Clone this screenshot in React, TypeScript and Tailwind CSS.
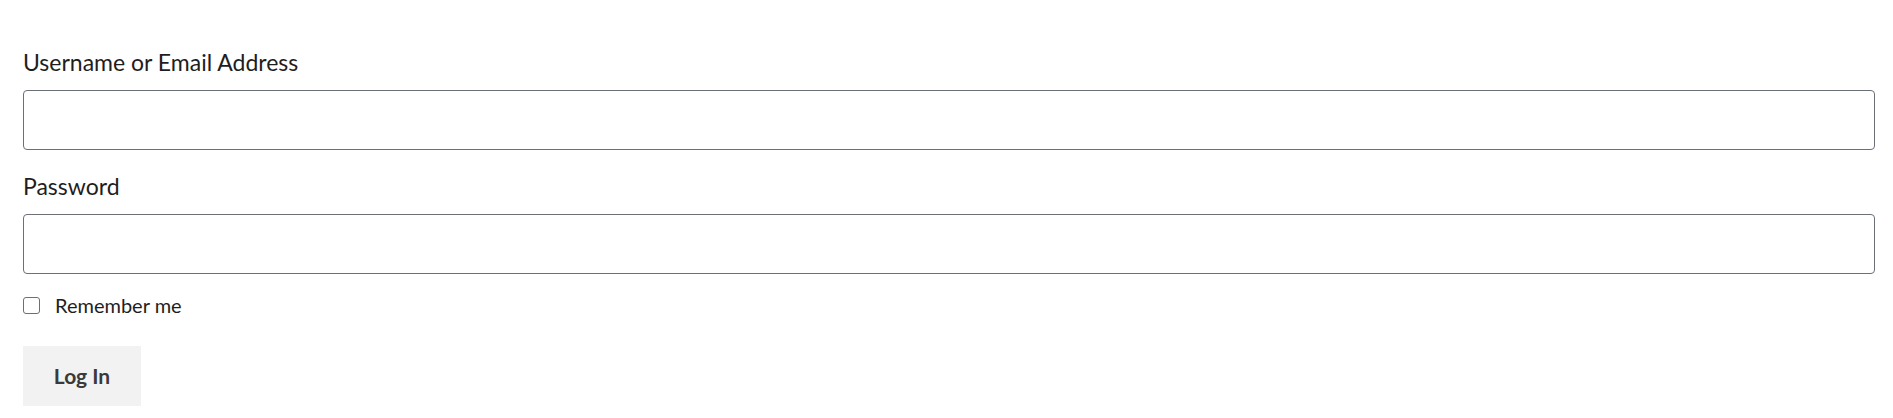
export default function App() {
  return (
    <div className="min-h-screen bg-white pl-[23px] pr-[18px] pt-[44px] font-['Lato','Liberation_Sans',sans-serif] text-[#1e1e1e]">
      <form className="flex flex-col" onSubmit={(e) => e.preventDefault()}>
        <label htmlFor="user_login" className="text-[23px] leading-[36px]">
          Username or Email Address
        </label>
        <input
          id="user_login"
          type="text"
          className="mt-[10px] h-[60px] w-full rounded-[4px] border border-[#6b6f76] px-3 outline-none"
        />

        <label htmlFor="user_pass" className="mt-[18px] text-[23px] leading-[36px]">
          Password
        </label>
        <input
          id="user_pass"
          type="password"
          className="mt-[10px] h-[60px] w-full rounded-[4px] border border-[#6b6f76] px-3 outline-none"
        />

        <label className="mt-[16px] flex h-[30px] items-center text-[20px]">
          <input type="checkbox" className="h-[17px] w-[17px] appearance-none rounded-[3px] border border-[#6b6f76]" />
          <span className="ml-[15px]">Remember me</span>
        </label>

        <div className="mt-[26px]">
          <button
            type="submit"
            className="h-[60px] w-[118px] bg-[#f2f2f2] text-[21px] font-bold text-[#3a3a3a]"
          >
            Log In
          </button>
        </div>
      </form>
    </div>
  );
}
